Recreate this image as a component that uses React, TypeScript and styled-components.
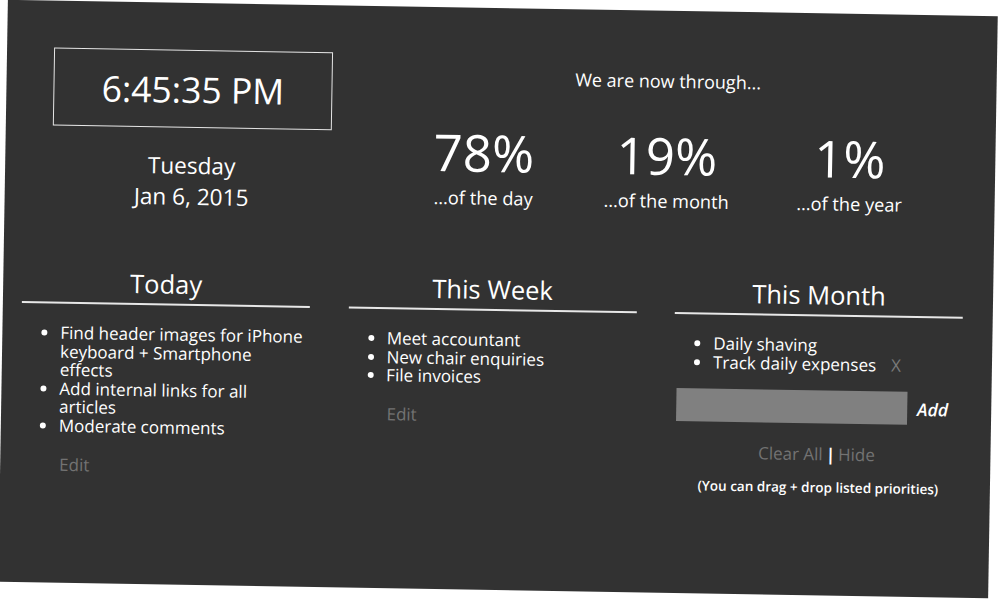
import React from "react";
import styled, { createGlobalStyle } from "styled-components";

const Global = createGlobalStyle`
  html, body { margin: 0; padding: 0; background: #ffffff; }
  body { font-family: "Open Sans", "Noto Sans", sans-serif; overflow: hidden; }
  * { box-sizing: border-box; }
`;

const Page = styled.div`
  width: 1000px;
  height: 602px;
  padding: 8px 0 0 3px;
`;

const Panel = styled.div`
  width: 990px;
  height: 582px;
  background: #323232;
  color: #ffffff;
  transform: rotate(0.95deg);
  transform-origin: 50% 50%;
  padding: 47px 0 0 19px;
  display: flex;
  flex-direction: column;
`;

const TopRow = styled.div`
  display: flex;
  align-items: flex-start;
`;

const ClockCol = styled.div`
  width: 307px;
  padding-left: 28px;
  display: flex;
  flex-direction: column;
  align-items: center;
`;

const ClockBox = styled.div`
  width: 279px;
  height: 78px;
  border: 1.5px solid #e6e6e6;
  display: flex;
  align-items: center;
  justify-content: center;
  font-size: 35.5px;
`;

const DateLine = styled.div<{ $first?: boolean }>`
  font-size: 22.6px;
  line-height: 31px;
  margin-top: ${(p) => (p.$first ? "22px" : "0")};
  text-align: center;
`;

const Stats = styled.div`
  margin-left: 61px;
  width: 549px;
  display: flex;
  flex-direction: column;
  align-items: center;
`;

const Through = styled.div`
  font-size: 18px;
  line-height: 24px;
  margin-top: 11px;
`;

const StatRow = styled.div`
  display: grid;
  grid-template-columns: repeat(3, 183px);
  margin-top: 34px;
`;

const Stat = styled.div`
  display: flex;
  flex-direction: column;
  align-items: center;
`;

const Big = styled.div`
  font-size: 51px;
  line-height: 56px;
`;

const Small = styled.div`
  font-size: 18.2px;
  line-height: 22px;
  margin-top: 7px;
`;

const Lists = styled.div`
  display: grid;
  grid-template-columns: repeat(3, 288px);
  column-gap: 38.5px;
  margin-top: 56px;
  align-items: start;
`;

const Col = styled.div`
  display: flex;
  flex-direction: column;
`;

const Heading = styled.div`
  font-size: 25.5px;
  line-height: 32px;
  text-align: center;
  padding-bottom: 4px;
  border-bottom: 2px solid #e8e8e8;
`;

const List = styled.ul`
  margin: 20px 0 0 0;
  padding-left: 39px;
  font-size: 17px;
  line-height: 18.6px;
`;

const Item = styled.li`
  padding-right: 4px;
`;

const Remove = styled.span`
  color: #7a7a7a;
  margin-left: 15px;
`;

const Edit = styled.div`
  color: #727272;
  font-size: 17px;
  line-height: 19px;
  margin-top: 19px;
  padding-left: 40px;
`;

const AddRow = styled.div`
  display: flex;
  align-items: center;
  margin-top: 17px;
  padding-left: 3px;
`;

const Input = styled.div`
  width: 231px;
  height: 33px;
  background: #808080;
`;

const AddBtn = styled.span`
  margin-left: 10px;
  font-size: 17.5px;
  font-style: italic;
  font-weight: 600;
`;

const Controls = styled.div`
  margin-top: 21px;
  text-align: center;
  font-size: 17px;
  line-height: 20px;
  color: #737373;
`;

const Sep = styled.span`
  color: #ffffff;
  font-weight: 700;
  margin: 0 3px;
`;

const Note = styled.div`
  margin-top: 14px;
  text-align: center;
  font-size: 13.5px;
  font-weight: 600;
  line-height: 18px;
  padding-left: 4px;
`;

export default function App() {
  return (
    <Page>
      <Global />
      <Panel>
        <TopRow>
          <ClockCol>
            <ClockBox>6:45:35 PM</ClockBox>
            <DateLine $first>Tuesday</DateLine>
            <DateLine>Jan 6, 2015</DateLine>
          </ClockCol>
          <Stats>
            <Through>We are now through...</Through>
            <StatRow>
              <Stat>
                <Big>78%</Big>
                <Small>...of the day</Small>
              </Stat>
              <Stat>
                <Big>19%</Big>
                <Small>...of the month</Small>
              </Stat>
              <Stat>
                <Big>1%</Big>
                <Small>...of the year</Small>
              </Stat>
            </StatRow>
          </Stats>
        </TopRow>
        <Lists>
          <Col>
            <Heading>Today</Heading>
            <List>
              <Item>Find header images for iPhone keyboard + Smartphone effects</Item>
              <Item>Add internal links for all articles</Item>
              <Item>Moderate comments</Item>
            </List>
            <Edit>Edit</Edit>
          </Col>
          <Col>
            <Heading>This Week</Heading>
            <List>
              <Item>Meet accountant</Item>
              <Item>New chair enquiries</Item>
              <Item>File invoices</Item>
            </List>
            <Edit>Edit</Edit>
          </Col>
          <Col>
            <Heading>This Month</Heading>
            <List>
              <Item>Daily shaving</Item>
              <Item>
                Track daily expenses<Remove>X</Remove>
              </Item>
            </List>
            <AddRow>
              <Input />
              <AddBtn>Add</AddBtn>
            </AddRow>
            <Controls>
              Clear All<Sep>|</Sep>Hide
            </Controls>
            <Note>(You can drag + drop listed priorities)</Note>
          </Col>
        </Lists>
      </Panel>
    </Page>
  );
}
